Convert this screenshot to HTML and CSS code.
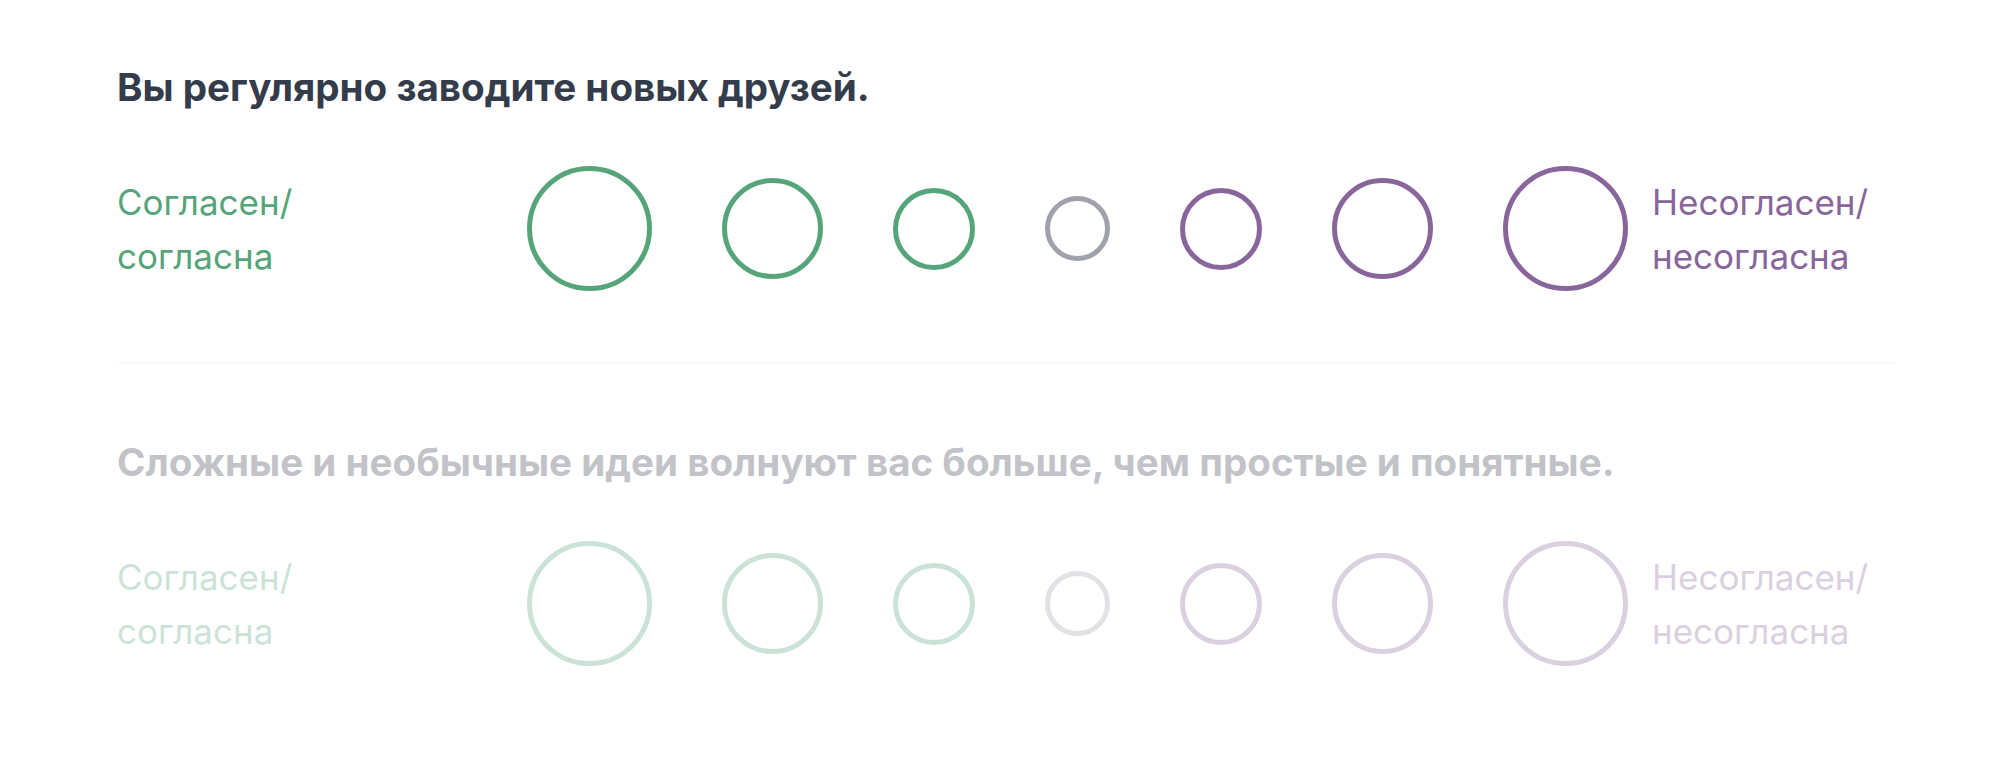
FILE: index.html
```html
<!DOCTYPE html>
<html lang="ru">
<head>
  <meta charset="UTF-8" />
  <meta name="viewport" content="width=device-width, initial-scale=1" />
  <title>Тест</title>
  <link rel="stylesheet" href="styles.css">
</head>
<body>

  <div class="quiz">

    <div class="question">
      <h2>Вы регулярно заводите новых друзей.</h2>
      <div class="answers">
        <div class="label agree">Согласен/<br>согласна</div>
        <div class="options">
          <span class="option agree size-1"></span>
          <span class="option agree size-2"></span>
          <span class="option agree size-3"></span>
          <span class="option neutral size-4"></span>
          <span class="option disagree size-3"></span>
          <span class="option disagree size-2"></span>
          <span class="option disagree size-1"></span>
        </div>
        <div class="label disagree">Несогласен/<br>несогласна</div>
      </div>
    </div>

    <div class="question inactive">
      <h2>Сложные и необычные идеи волнуют вас больше, чем простые и понятные.</h2>
      <div class="answers">
        <div class="label agree">Согласен/<br>согласна</div>
        <div class="options">
          <span class="option agree size-1"></span>
          <span class="option agree size-2"></span>
          <span class="option agree size-3"></span>
          <span class="option neutral size-4"></span>
          <span class="option disagree size-3"></span>
          <span class="option disagree size-2"></span>
          <span class="option disagree size-1"></span>
        </div>
        <div class="label disagree">Несогласен/<br>несогласна</div>
      </div>
    </div>

  </div>

</body>
</html>
```

FILE: styles.css
```css
body {
  margin: 0;
  font-family: Inter, "Noto Sans", sans-serif;
  background: #fff;
}
.quiz {
  padding: 62px 105px 0 117px;
}
.question {
  padding-bottom: 71px;
}
.question + .question {
  border-top: 2px solid #ececef;
  padding-top: 73px;
}
.question.inactive {
  opacity: 0.3;
}
h2 {
  margin: 0 0 54px;
  font-size: 38.6px;
  line-height: 50px;
  font-weight: 700;
  color: #343c4b;
}
.answers {
  display: flex;
  align-items: center;
}
.label {
  font-size: 35px;
  line-height: 54px;
}
.label.agree {
  width: 410px;
  color: #56a57a;
}
.label.disagree {
  margin-left: 24px;
  color: #88659b;
}
.options {
  display: flex;
  align-items: center;
  gap: 70px;
}
.option {
  display: block;
  box-sizing: border-box;
  border-radius: 50%;
  border: 5px solid;
}
.option.agree {
  border-color: #56a57a;
}
.option.disagree {
  border-color: #88659b;
}
.option.neutral {
  border-color: #9fa2aa;
}
.size-1 {
  width: 125px;
  height: 125px;
}
.size-2 {
  width: 101px;
  height: 101px;
}
.size-3 {
  width: 82px;
  height: 82px;
}
.size-4 {
  width: 65px;
  height: 65px;
}
```
